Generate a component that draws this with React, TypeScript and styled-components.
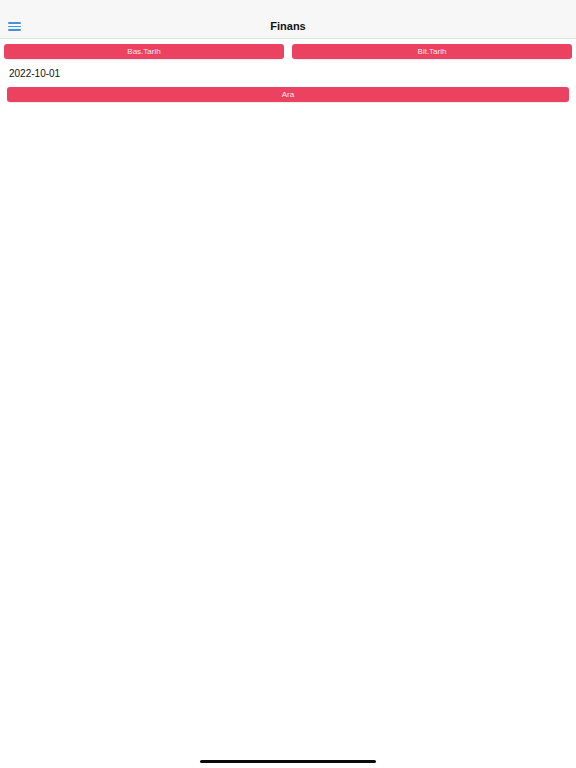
import { createGlobalStyle } from 'styled-components'
import styled from 'styled-components'

const accent = '#ea4260'

const GlobalStyle = createGlobalStyle`
  html, body {
    margin: 0;
    padding: 0;
    background: #fff;
    font-family: 'Liberation Sans', Arial, sans-serif;
  }
`

export default function App() {
  return (
    <Screen>
      <GlobalStyle />
      <Header>
        <MenuButton aria-label="menu">
          <span />
          <span />
          <span />
        </MenuButton>
        <Title>Finans</Title>
      </Header>
      <DateButtons>
        <PinkButton>Bas.Tarih</PinkButton>
        <PinkButton>Bit.Tarih</PinkButton>
      </DateButtons>
      <DateText>2022-10-01</DateText>
      <SearchRow>
        <PinkButton>Ara</PinkButton>
      </SearchRow>
      <HomeIndicator />
    </Screen>
  )
}

const Screen = styled.div`
  min-height: 100vh;
  display: flex;
  flex-direction: column;
  background: #fff;
`

const Header = styled.header`
  height: 38px;
  background: #f7f7f7;
  border-bottom: 1px solid #dde8dd;
  display: flex;
  align-items: flex-end;
  justify-content: center;
  position: relative;
`

const Title = styled.h1`
  margin: 0 0 5px;
  font-size: 11px;
  font-weight: bold;
  color: #111;
  line-height: 13px;
`

const MenuButton = styled.button`
  position: absolute;
  left: 8px;
  top: 22px;
  width: 13px;
  height: 9px;
  padding: 0;
  border: none;
  background: none;
  display: flex;
  flex-direction: column;
  justify-content: space-between;

  span {
    display: block;
    height: 1.6px;
    background: #4a8fdc;
    border-radius: 1px;
  }
`

const DateButtons = styled.div`
  display: grid;
  grid-template-columns: 1fr 1fr;
  gap: 8px;
  padding: 5px 4px 0;
`

const PinkButton = styled.button`
  height: 15px;
  border: none;
  border-radius: 3px;
  background: ${accent};
  color: #fde7ea;
  font-family: 'Liberation Sans', Arial, sans-serif;
  font-size: 8px;
  padding: 0;
  width: 100%;
  box-shadow: 0 1px 1px rgba(0, 0, 0, 0.08);
`

const DateText = styled.div`
  padding: 8px 9px 0;
  height: 20px;
  font-size: 10px;
  line-height: 13px;
  color: #111;
`

const SearchRow = styled.div`
  display: flex;
  padding: 0 7px;
`

const HomeIndicator = styled.div`
  margin: auto auto 5px;
  width: 176px;
  height: 3px;
  border-radius: 2px;
  background: #0a0a0a;
`
